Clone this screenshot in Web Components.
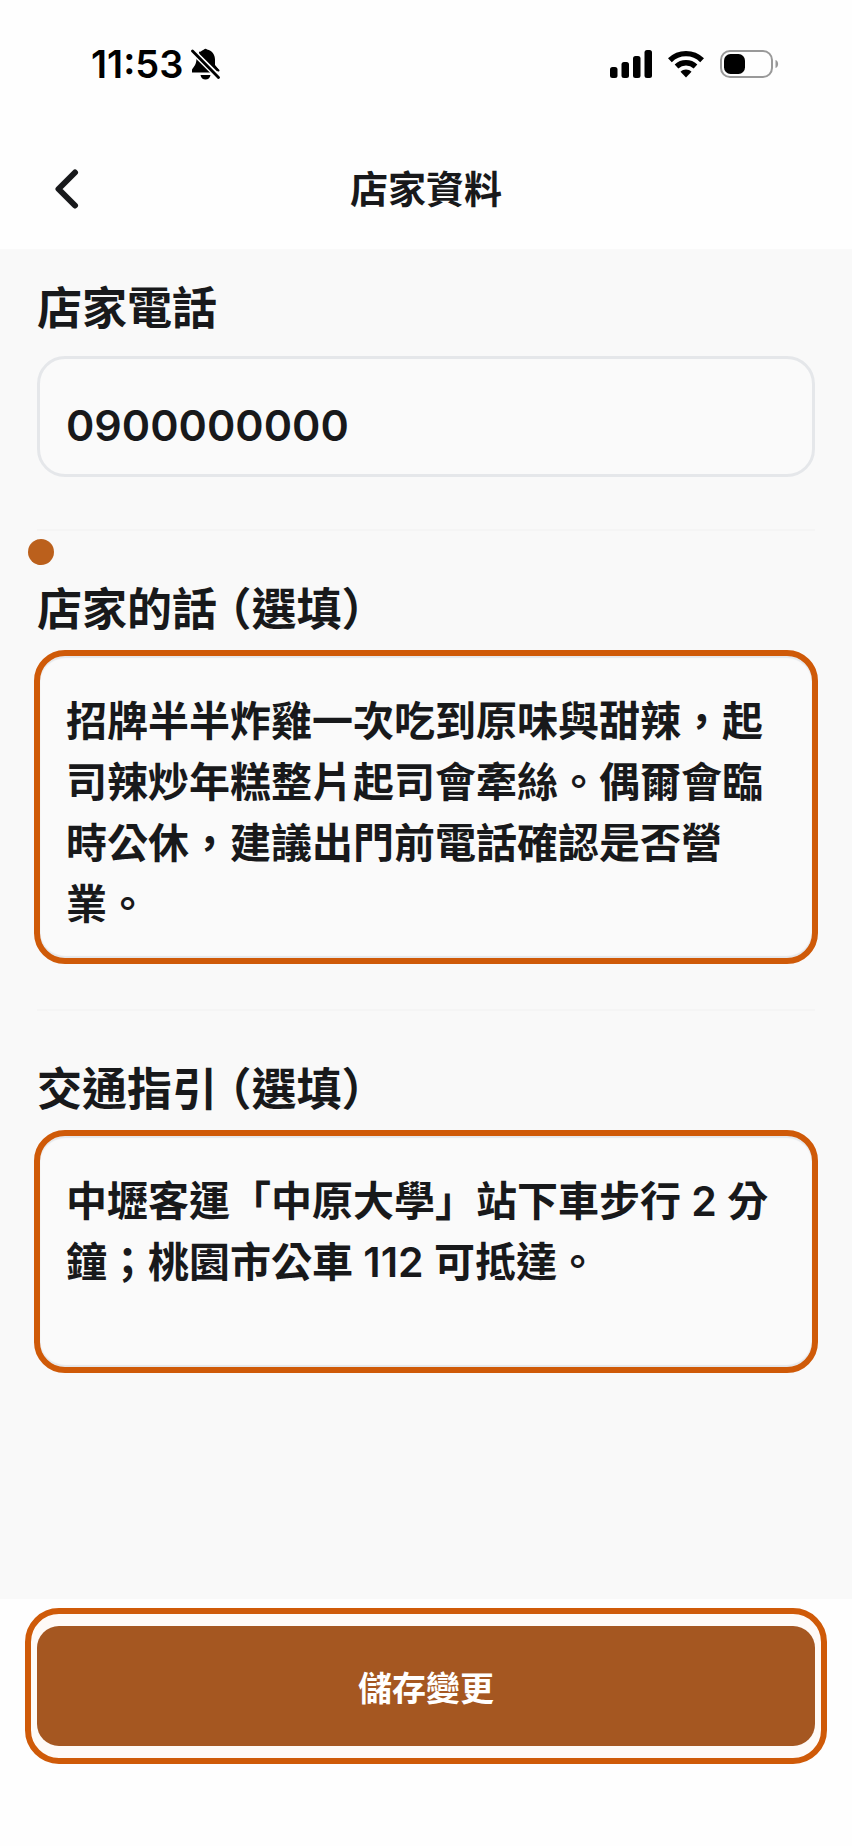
<!DOCTYPE html>
<html lang="zh-Hant">
<head>
<meta charset="utf-8">
<meta name="viewport" content="width=device-width, initial-scale=1">
<title>店家資料</title>
<style>
	html {
		--ink: #18191b;
		--accent: #cf5a08;
		--line: #e5e7ea;
		--surface: #f9f9f9;
	}

	body {
		margin: 0;
		background: #fefefe;
		color: var(--ink);
		font-family: Inter, "Noto Sans CJK TC", sans-serif;
	}
</style>
</head>
<body>

<shop-page>
	<status-bar slot="top" time="11:53"></status-bar>
	<nav-bar slot="top">店家資料</nav-bar>
	<shop-field class="roomy" label="店家電話" value="0900000000"></shop-field>
	<shop-field marked multiline label="店家的話" hint="（選填）" value="招牌半半炸雞一次吃到原味與甜辣，起司辣炒年糕整片起司會牽絲。偶爾會臨時公休，建議出門前電話確認是否營業。"></shop-field>
	<shop-field multiline label="交通指引" hint="（選填）" value="中壢客運「中原大學」站下車步行 2 分鐘；桃園市公車 112 可抵達。"></shop-field>
	<save-button slot="bottom">儲存變更</save-button>
</shop-page>

<script>
class ShopPage extends HTMLElement {

	constructor() {

		super();

		this.attachShadow({ mode: 'open' });
		this.shadowRoot.innerHTML = `
			<style>
				:host {
					display: flex;
					flex-direction: column;
					min-height: 100vh;
				}

				main {
					flex: 1;
					padding: 32px 37px;
					background: var(--surface);
				}

				footer {
					padding: 9px 25px 82px;
				}
			</style>
			<header><slot name="top"></slot></header>
			<main><slot></slot></main>
			<footer><slot name="bottom"></slot></footer>
		`;

	}

}

class StatusBar extends HTMLElement {

	constructor() {

		super();

		this.attachShadow({ mode: 'open' });
		this.shadowRoot.innerHTML = `
			<style>
				:host {
					display: flex;
					align-items: center;
					justify-content: space-between;
					height: 128px;
					padding: 0 73px 0 91px;
					color: #000;
				}

				div {
					display: flex;
					align-items: center;
				}

				.time {
					font-size: 38px;
					line-height: 44px;
					font-weight: 600;
				}

				.left { gap: 8px; }
				.right { gap: 16px; }
				svg { display: block; }
			</style>
			<div class="left">
				<span class="time"></span>
				<svg width="29" height="32" viewBox="0 0 29 32" aria-hidden="true">
					<path d="M9 4.5C10.500 2.500 12 2 13 1.500C13.500 .4 15.500 .4 16 1.500C21 2.500 24 6.500 24 11.500V17L27.500 21.500L25.500 24.500H1V22C1 20 5.500 18 5.500 10.500Z"/>
					<path d="M9.500 27H19.500C19 30 17 31.500 14.500 31.500S10 30 9.500 27Z"/>
					<path d="M1 2.500L28 29.500" stroke="#fefefe" stroke-width="6"/>
					<path d="M1.500 3L27.500 29.500" stroke="#000" stroke-width="2.800" stroke-linecap="round"/>
					<path d="M9 4.500L27.500 22.500" stroke="#000" stroke-width="2" stroke-linecap="round"/>
				</svg>
			</div>
			<div class="right">
				<svg width="42" height="28" viewBox="0 0 42 28" aria-hidden="true">
					<rect x="0" y="17" width="7.500" height="11" rx="2.500"/>
					<rect x="11.500" y="12" width="7.500" height="16" rx="2.500"/>
					<rect x="23" y="6" width="7.500" height="22" rx="2.500"/>
					<rect x="34.500" y="0" width="7.500" height="28" rx="2.500"/>
				</svg>
				<svg width="36" height="28" viewBox="0 0 36 28" fill="none" stroke="#000" stroke-width="5.400" aria-hidden="true">
					<path d="M1.900 10.200A23 23 0 0 1 34.100 10.200"/>
					<path d="M8.500 16.400A14 14 0 0 1 27.500 16.400"/>
					<path d="M18 27.500L12.500 21.800C15.500 18.600 20.500 18.600 23.500 21.800Z" fill="#000" stroke="none"/>
				</svg>
				<svg width="59" height="28" viewBox="0 0 59 28" aria-hidden="true">
					<rect x="1" y="1" width="51" height="26" rx="9" fill="none" stroke="#999" stroke-width="2"/>
					<rect x="4" y="4" width="21" height="20" rx="6.500"/>
					<path d="M55.500 10C59 11 59 17 55.500 18Z" fill="#999"/>
				</svg>
			</div>
		`;

	}

	connectedCallback() {

		this.shadowRoot.querySelector('.time').textContent = this.getAttribute('time');

	}

}

class NavBar extends HTMLElement {

	constructor() {

		super();

		this.attachShadow({ mode: 'open' });
		this.shadowRoot.innerHTML = `
			<style>
				:host {
					display: grid;
					grid-template-columns: 60px 1fr 60px;
					align-items: center;
					height: 121px;
					padding: 0 37px;
				}

				button {
					display: grid;
					place-items: center;
					width: 60px;
					height: 60px;
					padding: 0;
					border: 0;
					background: none;
					color: inherit;
				}

				h1 {
					margin: 0;
					font-size: 38px;
					line-height: 56px;
					font-weight: 600;
					text-align: center;
				}
			</style>
			<button type="button" aria-label="返回">
				<svg width="24" height="40" viewBox="0 0 24 40" fill="none" stroke="currentColor" stroke-width="6" stroke-linecap="round" stroke-linejoin="round">
					<path d="M20 3.500L3.500 20L20 36.500"/>
				</svg>
			</button>
			<h1><slot></slot></h1>
		`;

	}

}

class ShopField extends HTMLElement {

	constructor() {

		super();

		this.attachShadow({ mode: 'open' });

	}

	connectedCallback() {

		const control = this.hasAttribute('multiline')
			? '<textarea id="control"></textarea>'
			: '<input id="control" type="tel">';

		this.shadowRoot.innerHTML = `
			<style>
				:host {
					--gap: 15px;
					position: relative;
					display: block;
					padding-bottom: 48px;
					border-bottom: 2px solid #f5f5f5;
					margin-bottom: 51px;
				}

				:host(.roomy) {
					--gap: 19px;
					padding-bottom: 52px;
				}

				:host(:last-of-type) {
					border-bottom: 0;
					margin-bottom: 0;
				}

				/* unread marker, sits over the section's corner */
				:host([marked])::before {
					content: "";
					position: absolute;
					left: -9px;
					top: -43px;
					width: 26px;
					height: 26px;
					border-radius: 50%;
					background: #bb601c;
				}

				label {
					display: block;
					margin-bottom: var(--gap);
					font-size: 45px;
					line-height: 56px;
					font-weight: 600;
				}

				.hint {
					margin-left: 12px;
					font-feature-settings: "halt";
				}

				.hint:empty { display: none; }

				input, textarea {
					display: block;
					box-sizing: border-box;
					width: 100%;
					margin: 0;
					border: 3px solid var(--line);
					border-radius: 28px;
					background: #fafafa;
					color: inherit;
					font: inherit;
					font-weight: 600;
					outline: 0;
				}

				input {
					padding: 35px 26px 19px;
					height: 121px;
					font-size: 43px;
				}

				textarea {
					min-height: 237px;
					padding: 35px 26px 23px;
					font-size: 41px;
					line-height: 61px;
					field-sizing: content;
					resize: none;
					overflow: hidden;
					outline: 6px solid var(--accent);
					outline-offset: -3px;
					box-shadow: inset 0 2px 1px var(--line), inset 0 -2px 1px var(--line);
				}
			</style>
			<label for="control"><span class="text"></span><span class="hint"></span></label>
			${control}
		`;

		this.shadowRoot.querySelector('.text').textContent = this.getAttribute('label');
		this.shadowRoot.querySelector('.hint').textContent = this.getAttribute('hint') || '';
		this.shadowRoot.querySelector('#control').value = this.getAttribute('value');

	}

}

class SaveButton extends HTMLElement {

	constructor() {

		super();

		this.attachShadow({ mode: 'open' });
		this.shadowRoot.innerHTML = `
			<style>
				:host {
					display: block;
					padding: 12px 6px;
					border: 6px solid var(--accent);
					border-radius: 34px;
					background: #fefaf7;
				}

				button {
					display: block;
					width: 100%;
					height: 120px;
					border: 0;
					border-radius: 22px;
					background: #a55721;
					color: #fff;
					font: inherit;
					font-size: 34px;
					font-weight: 600;
				}
			</style>
			<button type="button"><slot></slot></button>
		`;

	}

}

customElements.define('shop-page', ShopPage);
customElements.define('status-bar', StatusBar);
customElements.define('nav-bar', NavBar);
customElements.define('shop-field', ShopField);
customElements.define('save-button', SaveButton);
</script>
</body>
</html>
